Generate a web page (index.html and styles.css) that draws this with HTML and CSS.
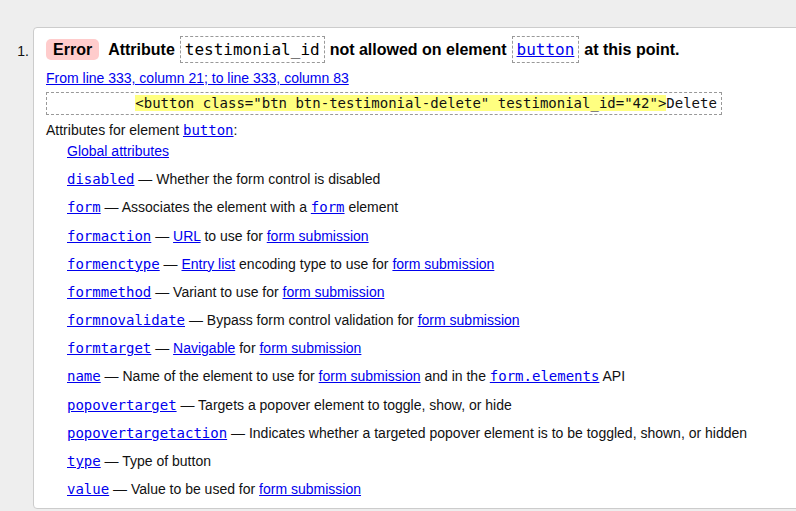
FILE: index.html
```html
<!DOCTYPE html>
<html lang="en">
<head>
<meta charset="utf-8">
<title>Validator result</title>
<link rel="stylesheet" href="styles.css">
</head>
<body>
<ol class="results">
  <li class="result">
    <span class="num">1.</span>
    <div class="card">
      <p class="message"><span class="badge">Error</span><span class="msg-text">Attribute</span><code class="box">testimonial_id</code><span class="msg-text">not allowed on element</span><code class="box"><a href="#">button</a></code><span class="msg-text">at this point.</span></p>
      <p class="location"><a href="#">From line 333, column 21; to line 333, column 83</a></p>
      <code class="extract">          <mark>&lt;button class="btn btn-testimonial-delete" testimonial_id="42"&gt;</mark>Delete</code>
      <p class="attrs-head">Attributes for element <code><a href="#">button</a></code>:</p>
      <dl class="attrs">
        <dd><a href="#">Global attributes</a></dd>
        <dd><code><a href="#">disabled</a></code> — Whether the form control is disabled</dd>
        <dd><code><a href="#">form</a></code> — Associates the element with a <code><a href="#">form</a></code> element</dd>
        <dd><code><a href="#">formaction</a></code> — <a href="#">URL</a> to use for <a href="#">form submission</a></dd>
        <dd><code><a href="#">formenctype</a></code> — <a href="#">Entry list</a> encoding type to use for <a href="#">form submission</a></dd>
        <dd><code><a href="#">formmethod</a></code> — Variant to use for <a href="#">form submission</a></dd>
        <dd><code><a href="#">formnovalidate</a></code> — Bypass form control validation for <a href="#">form submission</a></dd>
        <dd><code><a href="#">formtarget</a></code> — <a href="#">Navigable</a> for <a href="#">form submission</a></dd>
        <dd><code><a href="#">name</a></code> — Name of the element to use for <a href="#">form submission</a> and in the <code><a href="#">form.elements</a></code> API</dd>
        <dd><code><a href="#">popovertarget</a></code> — Targets a popover element to toggle, show, or hide</dd>
        <dd><code><a href="#">popovertargetaction</a></code> — Indicates whether a targeted popover element is to be toggled, shown, or hidden</dd>
        <dd><code><a href="#">type</a></code> — Type of button</dd>
        <dd><code><a href="#">value</a></code> — Value to be used for <a href="#">form submission</a></dd>
      </dl>
    </div>
  </li>
</ol>
</body>
</html>
```
FILE: styles.css
```css
html, body {
  margin: 0;
  padding: 0;
  background: #eeeeee;
  overflow: hidden;
}
body {
  font-family: "Liberation Sans", Arial, sans-serif;
  font-size: 14px;
  color: #111;
}
a {
  color: #0000ee;
  text-decoration: underline;
}
code {
  font-family: "DejaVu Sans Mono", monospace;
  font-size: 14px;
}
.results {
  list-style: none;
  margin: 27px 0 0;
  padding: 0;
}
.result {
  display: flex;
  align-items: flex-start;
}
.num {
  flex: none;
  width: 29px;
  padding-right: 4px;
  padding-top: 14px;
  text-align: right;
  line-height: 20px;
}
.card {
  flex: none;
  width: 820px;
  box-sizing: border-box;
  background: #fff;
  border: 1px solid #cccccc;
  border-radius: 4px;
  padding: 8px 12px 9px;
}
.message {
  display: flex;
  align-items: center;
  height: 27px;
  margin: 0;
  font-size: 16px;
  font-weight: bold;
  color: #000;
  white-space: nowrap;
}
.badge {
  background: #ffcccc;
  border-radius: 5px;
  padding: 1px 7px;
  line-height: 19px;
  margin-right: 9px;
}
.msg-text {
  line-height: 19px;
}
.box {
  font-size: 16px;
  font-weight: normal;
  line-height: 19px;
  padding: 3px 4px;
  border: 1px dashed #999;
  margin: 0 5px;
}
.location {
  margin: 5px 0 0;
  line-height: 20px;
}
.extract {
  display: block;
  width: fit-content;
  margin-top: 4px;
  padding: 2px 4px;
  border: 1px dashed #999;
  line-height: 17px;
  white-space: pre;
}
.extract mark {
  background: #ffff80;
  color: inherit;
}
.attrs-head {
  margin: 5px 0 0;
  line-height: 20px;
}
.attrs {
  display: flex;
  flex-direction: column;
  gap: 8.18px;
  margin: 1px 0 0;
  padding: 0 0 0 21px;
}
.attrs dd {
  margin: 0;
  line-height: 20px;
  white-space: nowrap;
}
.attrs code, .attrs-head code {
  line-height: 1;
}
```
